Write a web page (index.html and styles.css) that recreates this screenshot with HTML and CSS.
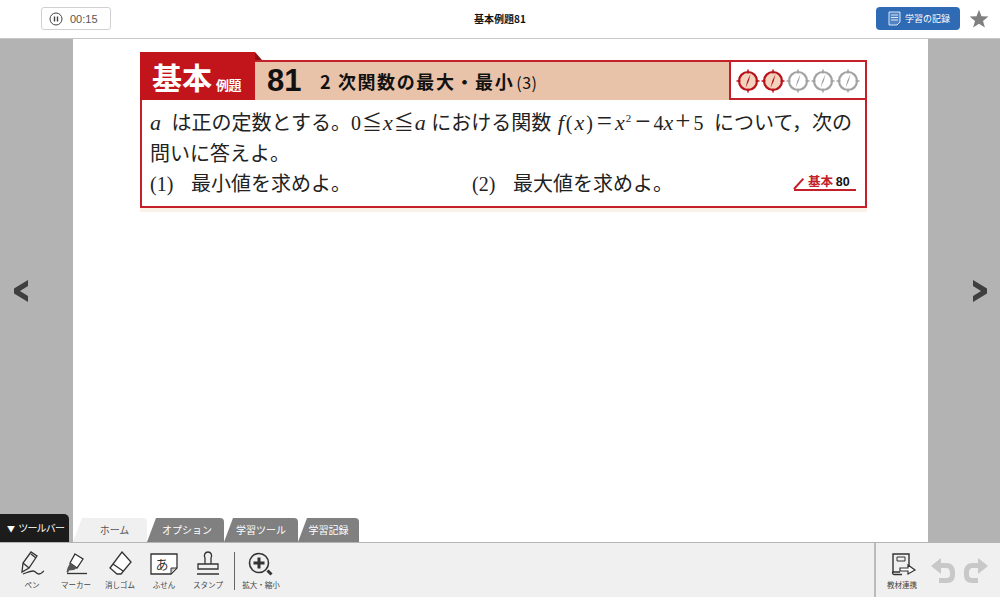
FILE: index.html
```html
<!DOCTYPE html>
<html lang="ja">
<head>
    <meta charset="UTF-8">
    <title>基本例題81</title>
    <link rel="stylesheet" href="styles.css">
</head>
<body>
    <svg class="defs" width="0" height="0">
        <symbol id="compass" viewBox="0 0 24 24">
            <circle class="dial" cx="12" cy="12" r="9"/>
            <path class="ticks" d="M12 .5v4M12 19.500v4M.5 12h4M19.500 12h4"/>
            <path class="needle" d="M14.500 5 12.800 12 9.500 19 11.200 12z"/>
        </symbol>
    </svg>

    <header class="topbar">
        <div class="timer">
            <svg width="14" height="14" viewBox="0 0 14 14"><circle cx="7" cy="7" r="6" fill="none" stroke="#444" stroke-width="1"/><path d="M5.500 4.500v5M8.500 4.500v5" stroke="#444" stroke-width="1.400"/></svg>
            <span>00:15</span>
        </div>
        <div class="title">基本例題81</div>
        <div class="topbar-right">
            <div class="record-btn">
                <svg width="13" height="15" viewBox="0 0 13 15"><path d="M1 1h11v10l-3 3H1z" fill="#4f82c2" stroke="#dbe6f4" stroke-width="1"/><path d="M3 4h7M3 6.500h7M3 9h7" stroke="#dbe6f4" stroke-width="1"/></svg>
                <span>学習の記録</span>
            </div>
            <svg class="star" width="20" height="20" viewBox="0 0 20 20"><path d="M10 .8l2.500 6.500 6.900.3-5.400 4.300 1.900 6.700L10 14.800l-5.900 3.800L6 11.900.6 7.600l6.900-.3z" fill="#808080"/></svg>
        </div>
    </header>

    <main class="viewer">
        <div class="side side-left">
            <svg width="16" height="24" viewBox="0 0 16 24"><path d="M15 1v6L7 12l8 5v6L1 14.500v-5z" fill="#3f3f3f"/></svg>
        </div>
        <div class="page">
            <section class="problem">
                <div class="problem-head">
                    <div class="badge"><b>基本</b><small>例題</small></div>
                    <div class="band">
                        <span class="num">81</span>
                        <span class="heading">2 次関数の最大・最小<span class="heading-no">(3)</span></span>
                    </div>
                    <div class="level">
                        <svg class="on"><use href="#compass"/></svg>
                        <svg class="on"><use href="#compass"/></svg>
                        <svg><use href="#compass"/></svg>
                        <svg><use href="#compass"/></svg>
                        <svg><use href="#compass"/></svg>
                    </div>
                </div>
                <div class="problem-body">
                    <p><span class="math math-a"><i>a</i></span> は正の定数とする。<span class="math math-range">0≦<i>x</i>≦<i>a</i></span> における関数 <span class="math math-fn"><span class="fn-name"><i>f</i>(<i>x</i>)</span><span class="op">=</span><i>x</i><sup>2</sup><span class="op">−</span>4<i>x</i><span class="op">+</span>5</span> について，次の</p>
                    <p>問いに答えよ。</p>
                    <div class="parts">
                        <p class="part"><span class="part-no">(1)</span>最小値を求めよ。</p>
                        <p class="part"><span class="part-no">(2)</span>最大値を求めよ。</p>
                        <div class="ref"><em>基本</em> <b>80</b></div>
                    </div>
                </div>
            </section>
        </div>
        <div class="side side-right">
            <svg width="16" height="24" viewBox="0 0 16 24"><path d="M1 1v6l8 5-8 5v6l14-8.500v-5z" fill="#3f3f3f"/></svg>
        </div>

        <div class="toolbar-tag"><span class="tag-arrow">▼</span>ツールバー</div>
        <nav class="tabs">
            <div class="tab active">ホーム</div>
            <div class="tab tab-option">オプション</div>
            <div class="tab">学習ツール</div>
            <div class="tab tab-record">学習記録</div>
        </nav>
    </main>

    <footer class="toolbar">
        <div class="tools">
            <div class="tool">
                <svg viewBox="0 0 30 26"><path d="M5 21 6 12 14 1l6 4-8 12zM6 12l6 5M14 3l5 4" fill="none" stroke="#333" stroke-width="1.300"/><path d="M6 23c3-1 7-3 10-3s3 3 6 3 3-2 5-3" fill="none" stroke="#333" stroke-width="1.300"/></svg>
                <span>ペン</span>
            </div>
            <div class="tool">
                <svg viewBox="0 0 30 26"><path d="M14 3l8 5-6 9-7-5z" fill="#fff" stroke="#333" stroke-width="1.300"/><path d="M9 12l7 5-3 2-5 .5-1 2.500-1.500-1 1-4z" fill="#555"/><path d="M6 22.500h20" stroke="#333" stroke-width="1.300"/></svg>
                <span>マーカー</span>
            </div>
            <div class="tool">
                <svg viewBox="0 0 30 26"><path d="M17 1l9 10-10 12h-4l-7-6z" fill="#fff" stroke="#333" stroke-width="1.300"/><path d="M8 13l10 7" stroke="#333" stroke-width="1.300"/></svg>
                <span>消しゴム</span>
            </div>
            <div class="tool">
                <svg viewBox="0 0 30 26"><path d="M2 3h26v14l-6 6H2z" fill="#fff" stroke="#333" stroke-width="1.300"/><path d="M28 17h-6v6z" fill="#ccc" stroke="#333" stroke-width="1"/><text x="13" y="18" text-anchor="middle" class="note-glyph">あ</text></svg>
                <span>ふせん</span>
            </div>
            <div class="tool">
                <svg viewBox="0 0 30 26"><path d="M12 13V7c-1.500-3 0-6 3-6s4.500 3 3 6v6M5 13h20v5H5zM4 23h22" fill="none" stroke="#333" stroke-width="1.300"/></svg>
                <span>スタンプ</span>
            </div>
            <div class="tool-sep"></div>
            <div class="tool">
                <svg viewBox="0 0 30 26"><circle cx="13" cy="12" r="9.500" fill="none" stroke="#333" stroke-width="1.600"/><path d="M13 6.500v11M7.500 12h11" stroke="#333" stroke-width="3"/><path d="M21.500 19.500l4 4" stroke="#333" stroke-width="3"/></svg>
                <span>拡大・縮小</span>
            </div>
        </div>
        <div class="tools-right">
            <div class="tool">
                <svg viewBox="0 0 30 26"><path d="M13 21H6V3h16v12M6 20c-1 2 0 3.500 1 3.500h8" fill="none" stroke="#333" stroke-width="1.400"/><path d="M10 6h8v4h-8z" fill="none" stroke="#333" stroke-width="1"/><path d="M13 17h8v-3l7 5-7 4v-3h-8z" fill="#fff" stroke="#333" stroke-width="1.200"/></svg>
                <span>教材連携</span>
            </div>
            <svg class="undo" width="25" height="26" viewBox="0 0 25 26"><path d="M0 8 10 0v5h6c5 0 8 4 8 9v3c0 5-3 8-8 8H8v-5h7c3 0 4-1 4-4v-1c0-3-1-5-4-5h-5v6z" fill="#c8c8c8"/></svg>
            <svg class="redo" width="25" height="26" viewBox="0 0 25 26"><path d="M25 8 15 0v5H9C4 5 1 9 1 14v3c0 5 3 8 8 8h6v-5H10c-3 0-4-1-4-4v-1c0-3 1-5 4-5h5v6z" fill="#c8c8c8"/></svg>
        </div>
    </footer>
</body>
</html>
```

FILE: styles.css
```css
* {
    box-sizing: border-box;
}
html, body {
    height: 100%;
}
body {
    margin: 0;
    display: flex;
    flex-direction: column;
    height: 597px;
    overflow: hidden;
    background: white;
    color: #222;
    font-family: "Noto Sans CJK JP", "Liberation Sans", sans-serif;
}
p {
    margin: 0;
}
.defs {
    position: absolute;
}

/* top bar */
.topbar {
    display: flex;
    align-items: center;
    justify-content: space-between;
    position: relative;
    height: 39px;
    padding: 0 11px 1px 41px;
    border-bottom: 1px solid #c8c8c8;
}
.timer {
    display: flex;
    align-items: center;
    gap: 7px;
    width: 70px;
    height: 23px;
    padding-left: 7px;
    border: 1px solid #d0d0d0;
    border-radius: 3px;
    font-family: "Liberation Sans", sans-serif;
    font-size: 11px;
    color: #555;
}
.title {
    position: absolute;
    left: 0;
    right: 0;
    top: 12px;
    text-align: center;
    font-size: 10px;
    line-height: 14px;
    font-weight: 700;
    color: #111;
}
.topbar-right {
    display: flex;
    align-items: center;
    gap: 9px;
}
.record-btn {
    display: flex;
    align-items: center;
    gap: 4px;
    width: 84px;
    height: 23px;
    padding-left: 12px;
    background: #2f6ab5;
    border-radius: 4px;
    font-size: 9px;
    color: white;
}

/* viewer */
.viewer {
    display: flex;
    position: relative;
    flex: 1;
    min-height: 0;
}
.side {
    display: flex;
    align-items: center;
    justify-content: center;
    background: #b3b3b3;
}
.side-left {
    width: 73px;
    padding-right: 32px;
}
.side-right {
    width: 72px;
    padding-left: 32px;
}
.page {
    flex: 1;
    padding: 13px 61px 0 67px;
    background: white;
}

/* problem card */
.problem {
    height: 156px;
    box-shadow: 0 4px 0 #faf1e8;
}
.problem-head {
    display: flex;
    height: 48px;
}
.badge {
    position: relative;
    display: flex;
    align-items: flex-end;
    gap: 4px;
    width: 115px;
    padding: 0 0 3px 12px;
    background: #c1151b;
    color: white;
}
.badge::after {
    content: "";
    position: absolute;
    left: 100%;
    top: 0;
    border-top: 8px solid transparent;
    border-left: 7px solid #8e1015;
}
.badge b {
    font-size: 30px;
    line-height: 42px;
}
.badge small {
    font-size: 13px;
    font-weight: 700;
    line-height: 24px;
    letter-spacing: -0.5px;
}
.band {
    display: flex;
    align-items: center;
    flex: 1;
    margin-top: 8px;
    padding-left: 12px;
    background: #e8c3a9;
    border-top: 2px solid #c3202a;
    color: #111;
}
.num {
    width: 53px;
    font-family: "Liberation Sans", sans-serif;
    font-size: 31px;
    font-weight: 700;
    line-height: 38px;
}
.heading {
    font-size: 18px;
    font-weight: 700;
    letter-spacing: 1.600px;
}
.heading-no {
    margin-left: 2px;
    font-size: 16px;
    font-weight: 400;
    letter-spacing: 0.5px;
}
.level {
    display: flex;
    align-items: center;
    justify-content: center;
    gap: 1px;
    width: 138px;
    margin-top: 8px;
    padding-top: 1px;
    background: white;
    border: 2px solid #c3202a;
    --dial: #a3a3a3;
    --face: none;
}
.level svg {
    width: 24px;
    height: 24px;
}
.level .on {
    --dial: #b8131b;
    --face: #f3d3bd;
}
.dial {
    fill: var(--face);
    stroke: var(--dial);
    stroke-width: 2.200;
}
.ticks {
    fill: none;
    stroke: var(--dial);
    stroke-width: 1.500;
}
.needle {
    fill: var(--dial);
}

.problem-body {
    height: 108px;
    padding: 7px 9px 0 8px;
    border: 2px solid #c3202a;
    border-top: 0;
    font-size: 20px;
    line-height: 29px;
    white-space: nowrap;
    color: #222;
}
.math {
    font-family: "Liberation Serif", "Noto Sans CJK JP", serif;
}
.math i {
    font-size: 22px;
}
.math sup {
    margin: 0 2px 0 1px;
    font-size: 11px;
    line-height: 0;
}
.math-a {
    margin-right: 6px;
}
.math-range {
    letter-spacing: 1px;
}
.math-fn {
    margin: 0 6px 0 2px;
}
.fn-name {
    letter-spacing: 2px;
}
.op {
    margin: 0 3px 0 2px;
    font-size: 27px;
    line-height: 0;
}
.parts {
    display: flex;
    align-items: baseline;
    margin-top: 1px;
}
.part {
    width: 322px;
}
.part-no {
    display: inline-block;
    width: 41px;
    font-family: "Liberation Serif", serif;
}
.ref {
    position: relative;
    top: -5px;
    width: 62px;
    margin-left: auto;
    padding-left: 14px;
    border-bottom: 2px solid #c3202a;
    font-size: 12.500px;
    line-height: 14px;
}
.ref::before {
    content: "";
    position: absolute;
    left: 0;
    bottom: -1px;
    width: 14px;
    border-top: 2px solid #c3202a;
    transform: rotate(-48deg);
    transform-origin: left;
}
.ref em {
    font-style: normal;
    font-weight: 700;
    color: #c3202a;
}
.ref b {
    font-family: "Liberation Sans", sans-serif;
    color: #111;
}

/* tabs over the page */
.toolbar-tag {
    position: absolute;
    left: 0;
    bottom: 0;
    width: 69px;
    height: 28px;
    padding: 6px 0 0 7px;
    background: #1c1c1c;
    border-radius: 0 5px 0 0;
    color: white;
    font-size: 10px;
    line-height: 16px;
    letter-spacing: -0.8px;
    white-space: nowrap;
}
.tag-arrow {
    margin-right: 4px;
    font-size: 8px;
}
.tabs {
    display: flex;
    position: absolute;
    left: 73px;
    bottom: 0;
    height: 24px;
}
.tab {
    width: 74px;
    background: #808080;
    clip-path: polygon(9px 0, 100% 0, 100% 100%, 0 100%);
    border-radius: 0 4px 0 0;
    color: white;
    font-size: 10px;
    line-height: 23px;
    text-align: center;
}
.tab.active {
    padding-left: 9px;
    background: #f0f0f0;
    color: #555;
}
.tab-option {
    width: 77px;
    padding-left: 3px;
}
.tab-record {
    width: 61px;
}

/* bottom toolbar */
.toolbar {
    display: flex;
    justify-content: space-between;
    height: 55px;
    background: #f0f0f0;
    border-top: 1px solid #b5b5b5;
}
.tools {
    display: flex;
    padding: 8px 0 0 10px;
}
.tool {
    display: flex;
    flex-direction: column;
    align-items: center;
    width: 44px;
    color: #444;
    font-size: 7.500px;
    line-height: 12px;
    white-space: nowrap;
}
.tool svg {
    width: 30px;
    height: 26px;
    margin-bottom: 2px;
}
.note-glyph {
    font-size: 13px;
    fill: #333;
}
.tool-sep {
    width: 1px;
    height: 38px;
    margin: 1px 2px 0 4px;
    background: #666;
}
.tool-sep + .tool {
    width: 48px;
}
.tools-right {
    display: flex;
    align-items: flex-start;
    width: 126px;
    padding: 8px 0 0 4px;
    border-left: 2px solid #bbb;
}
.undo {
    margin: 7px 7px 0 7px;
}
.redo {
    margin-top: 7px;
}
```
